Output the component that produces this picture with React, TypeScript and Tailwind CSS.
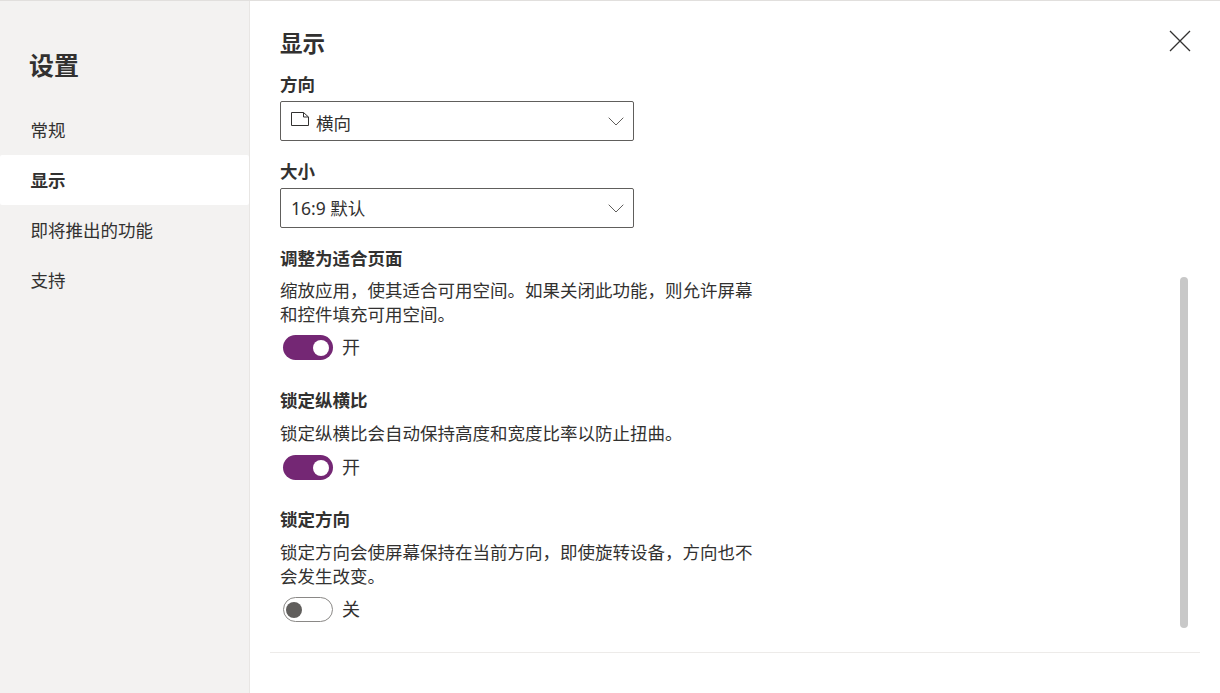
import React from "react";

const font = '"Noto Sans", "Noto Sans CJK SC", sans-serif';

function Chevron() {
  return (
    <svg width="16" height="9" viewBox="0 0 16 9" fill="none" className="shrink-0">
      <path d="M0.7 0.7 L8 8 L15.3 0.7" stroke="#605e5c" strokeWidth="1" />
    </svg>
  );
}

function Select({ children }: { children: React.ReactNode }) {
  return (
    <div className="flex h-[40px] w-[354px] items-center justify-between rounded-[2px] border border-[#605e5c] pl-[10px] pr-[9px]">
      <div className="flex items-center text-[17.5px] text-[#323130]">{children}</div>
      <Chevron />
    </div>
  );
}

function Toggle({ on }: { on: boolean }) {
  return (
    <div className="ml-[3px] flex h-[25px] items-center gap-[9px]">
      {on ? (
        <div className="flex h-[25px] w-[50px] items-center justify-end rounded-full bg-[#742774] pr-[4px]">
          <div className="h-[16px] w-[16px] rounded-full bg-white" />
        </div>
      ) : (
        <div className="flex h-[25px] w-[50px] items-center rounded-full border border-[#8a8886] bg-white pl-[2px]">
          <div className="h-[16px] w-[16px] rounded-full bg-[#605e5c]" />
        </div>
      )}
      <span className="text-[18px] leading-[25px] text-[#323130]">{on ? "开" : "关"}</span>
    </div>
  );
}

function Section({
  title,
  text,
  on,
  className,
  textClass,
  toggleClass,
}: {
  title: string;
  text: string;
  on: boolean;
  className: string;
  textClass: string;
  toggleClass: string;
}) {
  return (
    <section className={className}>
      <h3 className="text-[17.5px] font-bold leading-[24px] text-[#323130]">{title}</h3>
      <p className={`${textClass} w-[480px] text-[17.5px] leading-[24px] text-[#323130]`}>{text}</p>
      <div className={toggleClass}>
        <Toggle on={on} />
      </div>
    </section>
  );
}

export default function App() {
  return (
    <div className="flex h-[693px] w-[1220px] overflow-hidden border-t border-[#e1dfdd] bg-white" style={{ fontFamily: font }}>
      <aside className="w-[250px] shrink-0 border-r border-[#e8e6e4] bg-[#f3f2f1]">
        <h1 className="ml-[29px] mt-[47px] text-[25px] font-bold leading-[34px] text-[#323130]">设置</h1>
        <nav className="mt-[23px] text-[17.5px] text-[#323130]">
          <div className="flex h-[50px] items-center pl-[30.5px]">常规</div>
          <div className="flex h-[50px] items-center rounded-[2px] bg-white pl-[30.5px] font-bold">显示</div>
          <div className="flex h-[50px] items-center pl-[30.5px]">即将推出的功能</div>
          <div className="flex h-[50px] items-center pl-[30.5px]">支持</div>
        </nav>
      </aside>
      <main className="relative min-w-0 flex-1">
        <div className="pl-[30px] pt-[28px]">
          <h2 className="text-[22.5px] font-bold leading-[30px] text-[#323130]">显示</h2>
          <label className="mt-[13px] block text-[17.5px] font-bold leading-[24px] text-[#323130]">方向</label>
          <div className="mt-[5px]">
            <Select>
              <svg width="18" height="16" viewBox="0 0 18 16" fill="none" className="mr-[7px] -mt-[4px]">
                <path d="M0.5 1.5 H12.5 L17.5 6 V14.5 H0.5 Z M12.5 1.5 V6 H17.5" stroke="#323130" strokeWidth="1" />
              </svg>
              <span className="mt-[4px]">横向</span>
            </Select>
          </div>
          <label className="mt-[18px] block text-[17.5px] font-bold leading-[24px] text-[#323130]">大小</label>
          <div className="mt-[5px]">
            <Select>
              <span className="mt-[1px]">16:9 默认</span>
            </Select>
          </div>
          <Section
            className="mt-[18px]"
            textClass="mt-[8px]"
            toggleClass="mt-[9px]"
            title="调整为适合页面"
            text="缩放应用，使其适合可用空间。如果关闭此功能，则允许屏幕和控件填充可用空间。"
            on
          />
          <Section
            className="mt-[28px]"
            textClass="mt-[9px]"
            toggleClass="mt-[10px]"
            title="锁定纵横比"
            text="锁定纵横比会自动保持高度和宽度比率以防止扭曲。"
            on
          />
          <Section
            className="mt-[27px]"
            textClass="mt-[9px]"
            toggleClass="mt-[9px]"
            title="锁定方向"
            text="锁定方向会使屏幕保持在当前方向，即使旋转设备，方向也不会发生改变。"
            on={false}
          />
        </div>
        <div className="absolute left-[20px] top-[651px] h-px w-[930px] bg-[#edebe9]" />
        <div className="absolute left-[930px] top-[276px] h-[351px] w-[8px] rounded-full bg-[#c8c8c8]" />
        <svg width="22" height="22" viewBox="0 0 22 22" fill="none" className="absolute left-[919px] top-[29px]">
          <path d="M1 1 L21 21 M21 1 L1 21" stroke="#323130" strokeWidth="1.3" />
        </svg>
      </main>
    </div>
  );
}
